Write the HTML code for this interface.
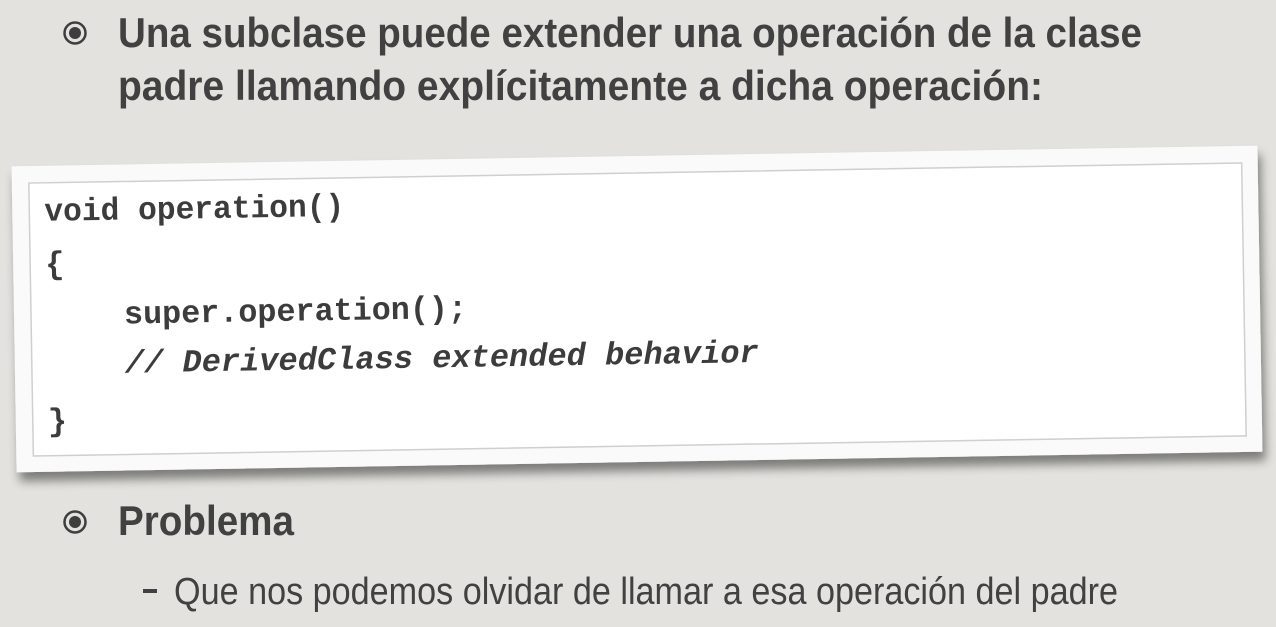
<!DOCTYPE html>
<html><head><meta charset="utf-8"><style>
html,body{margin:0;padding:0;background:#e3e2de;}
svg{display:block;}
</style></head><body>
<svg width="1276" height="627" viewBox="0 0 1276 627" xmlns="http://www.w3.org/2000/svg">
<defs>
<filter id="sh" x="-5%" y="-10%" width="110%" height="130%">
<feDropShadow dx="3" dy="9" stdDeviation="5" flood-color="#000" flood-opacity="0.45"/>
</filter>
</defs>
<rect width="1276" height="627" fill="#e3e2de"/>
<!-- bullets -->
<circle cx="75" cy="33" r="10.5" fill="none" stroke="#3e3e3e" stroke-width="2.5"/>
<circle cx="75" cy="33" r="6" fill="#3e3e3e"/>
<circle cx="75" cy="522" r="10.5" fill="none" stroke="#3e3e3e" stroke-width="2.5"/>
<circle cx="75" cy="522" r="6" fill="#3e3e3e"/>
<g font-family="Liberation Sans, sans-serif" font-weight="bold" fill="#414141" font-size="42">
<text x="118" y="47" textLength="1024" lengthAdjust="spacingAndGlyphs">Una subclase puede extender una operación de la clase</text>
<text x="118" y="100" textLength="925" lengthAdjust="spacingAndGlyphs">padre llamando explícitamente a dicha operación:</text>
<text x="118" y="535" textLength="176" lengthAdjust="spacingAndGlyphs">Problema</text>
</g>
<rect x="143" y="589" width="14" height="4" fill="#414141"/>
<text x="174" y="604" font-family="Liberation Sans, sans-serif" font-size="38" fill="#414141" textLength="944" lengthAdjust="spacingAndGlyphs">Que nos podemos olvidar de llamar a esa operación del padre</text>
<!-- card -->
<g transform="rotate(-0.95 637 309)">
<rect x="14" y="156" width="1246" height="306" fill="#fafafa" filter="url(#sh)"/>
<rect x="31" y="173" width="1213" height="273" fill="#fff" stroke="#cfcfcf" stroke-width="1.5"/>
<g font-family="Liberation Mono, monospace" font-weight="bold" font-size="32" fill="#3c3c3c">
<text x="46" y="211" textLength="300" lengthAdjust="spacingAndGlyphs">void operation()</text>
<text x="46" y="264">{</text>
<text x="124" y="315" textLength="343" lengthAdjust="spacingAndGlyphs">super.operation();</text>
<text x="124" y="364" font-style="italic" textLength="634" lengthAdjust="spacingAndGlyphs">// DerivedClass extended behavior</text>
<text x="46" y="421">}</text>
</g>
</g>
</svg>
</body></html>
